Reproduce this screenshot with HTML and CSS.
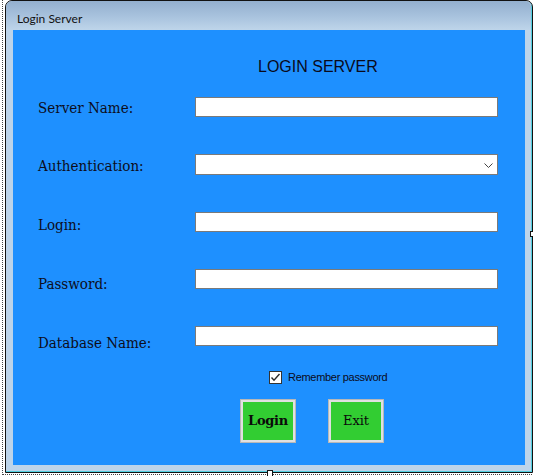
FILE: index.html
```html
<!DOCTYPE html>
<html>
<head>
<meta charset="utf-8">
<title>Login Server</title>
<link rel="stylesheet" href="styles.css">
</head>
<body>
<div class="selection">
  <div class="window">
    <div class="titlebar"><span class="title">Login Server</span></div>
    <div class="client">
      <h1 class="heading">LOGIN SERVER</h1>
      <div class="form">
        <div class="labels">
          <label class="label">Server Name:</label>
          <label class="label">Authentication:</label>
          <label class="label">Login:</label>
          <label class="label">Password:</label>
          <label class="label">Database Name:</label>
        </div>
        <div class="fields">
          <div class="input"></div>
          <div class="input combo">
            <svg class="chevron" width="9" height="5" viewBox="0 0 9 5"><polyline points="0.5,0.5 4.5,4.5 8.5,0.5" fill="none" stroke="#444" stroke-width="1"/></svg>
          </div>
          <div class="input"></div>
          <div class="input"></div>
          <div class="input"></div>
        </div>
      </div>
      <div class="remember">
        <span class="checkbox">
          <svg width="11" height="11" viewBox="0 0 11 11"><polyline points="1.5,5.5 4,8.2 9.5,2" fill="none" stroke="#2b2b2b" stroke-width="1.4"/></svg>
        </span>
        <span class="remember-text">Remember password</span>
      </div>
      <div class="buttons">
        <button class="btn btn-login">Login</button>
        <button class="btn">Exit</button>
      </div>
    </div>
  </div>
  <span class="handle handle-bottom"></span>
  <span class="handle handle-right"></span>
</div>
</body>
</html>
```
FILE: styles.css
```css
html, body {
  margin: 0;
  padding: 0;
  background: #ffffff;
}
body {
  width: 533px;
  height: 476px;
  overflow: hidden;
  position: relative;
}
.selection {
  position: relative;
  margin-left: 2px;
  padding-left: 2px;
  padding-bottom: 1px;
  border-left: 1px dotted #444;
  border-bottom: 1px dotted #444;
  width: 530px;
  box-sizing: border-box;
}
.window {
  box-sizing: border-box;
  width: 528px;
  height: 473px;
  background: #bdd4ea;
  border: 1px solid #111;
  border-radius: 7px 7px 0 0;
  box-shadow: inset -1px -1px 0 #52cfe0;
  display: flex;
  flex-direction: column;
  overflow: hidden;
}
.titlebar {
  height: 29px;
  flex: none;
  background: linear-gradient(to bottom, #93afce 0%, #a9c3de 55%, #bed5ea 100%);
  border-radius: 6px 6px 0 0;
  display: flex;
  align-items: flex-start;
  padding-left: 11px;
  margin-right: 1px;
}
.title {
  font-family: Lato, "Open Sans", sans-serif;
  font-size: 12px;
  line-height: 16px;
  margin-top: 10px;
  color: #111;
}
.client {
  width: 512px;
  height: 435px;
  margin-left: 7px;
  background: #1e90ff;
  box-sizing: border-box;
  padding-top: 28px;
  display: flex;
  flex-direction: column;
}
.heading {
  margin: 0;
  padding-left: 245px;
  font-family: "Liberation Sans", Arial, sans-serif;
  font-weight: normal;
  font-size: 16px;
  line-height: 18px;
  color: #0a0a1a;
}
.form {
  display: flex;
  margin-top: 21px;
}
.labels {
  width: 182px;
  padding-left: 25px;
  padding-top: 1.6px;
  box-sizing: border-box;
  display: flex;
  flex-direction: column;
  gap: 40.75px;
}
.label {
  font-family: "DejaVu Serif", serif;
  font-stretch: condensed;
  font-size: 15px;
  line-height: 18px;
  height: 18px;
  color: #0d0d1a;
  white-space: nowrap;
}
.fields {
  display: flex;
  flex-direction: column;
  gap: 37px;
}
.input {
  box-sizing: border-box;
  width: 303px;
  height: 20px;
  background: #fff;
  border: 1px solid #7a7a7a;
}
.combo {
  height: 21px;
  display: flex;
  align-items: center;
  justify-content: flex-end;
  padding-right: 4px;
}
.chevron {
  display: block;
  margin-top: 1px;
}
.remember {
  display: flex;
  align-items: center;
  margin-top: 19.4px;
  padding-left: 256px;
  height: 13px;
}
.checkbox {
  box-sizing: border-box;
  width: 13px;
  height: 13px;
  border: 1px solid #333;
  background: #fff;
  display: flex;
  align-items: center;
  justify-content: center;
}
.checkbox svg {
  display: block;
}
.remember-text {
  margin-left: 6px;
  font-family: "Liberation Sans", Arial, sans-serif;
  font-size: 11px;
  letter-spacing: -0.3px;
  line-height: 13px;
  color: #0a0a20;
}
.buttons {
  display: flex;
  gap: 32px;
  margin-top: 15px;
  padding-left: 227px;
}
.btn {
  box-sizing: border-box;
  width: 56px;
  height: 44px;
  margin: 0;
  padding: 0;
  background: #32cd32;
  border: 1px solid #b8b8b8;
  box-shadow: inset 0 0 0 2px #e0e0e0;
  font-family: "DejaVu Serif", serif;
  font-size: 13px;
  color: #0a0a0a;
  text-align: center;
}
.btn-login {
  font-weight: bold;
  letter-spacing: -0.3px;
}
.handle {
  position: absolute;
  box-sizing: border-box;
  background: #fff;
  border: 1px solid #111;
}
.handle-bottom {
  left: 264px;
  top: 470px;
  width: 6px;
  height: 7px;
}
.handle-right {
  left: 527px;
  top: 231px;
  width: 6px;
  height: 6px;
}
```
